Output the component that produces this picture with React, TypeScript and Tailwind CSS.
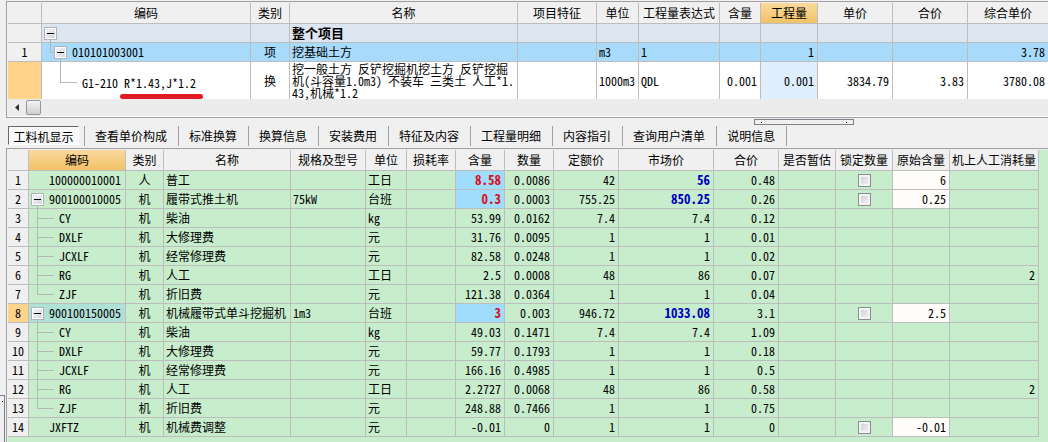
import React from 'react';
import clsx from 'clsx';

type TopRow = {
  no: string;
  kind: 'root' | 'item' | 'quota';
  code: string;
  type: string;
  name: string[];
  unit: string;
  expr: string;
  content: string;
  qty: string;
  price: string;
  total: string;
  full: string;
};

type Resource = {
  code: string;
  level: 'leaf' | 'parent' | 'child' | 'last';
  type: string;
  name: string;
  spec?: string;
  unit: string;
  content: string;
  qty: string;
  fixed: string;
  market: string;
  total: string;
  origin?: string;
  labour?: string;
  strong?: boolean;
  active?: boolean;
};

const topRows: TopRow[] = [
  { no: '', kind: 'root', code: '', type: '', name: ['整个项目'], unit: '', expr: '', content: '', qty: '', price: '', total: '', full: '' },
  { no: '1', kind: 'item', code: '010101003001', type: '项', name: ['挖基础土方'], unit: 'm3', expr: '1', content: '', qty: '1', price: '', total: '', full: '3.78' },
  {
    no: '',
    kind: 'quota',
    code: 'G1-210 R*1.43,J*1.2',
    type: '换',
    name: ['挖一般土方 反铲挖掘机挖土方 反铲挖掘', '机(斗容量1.0m3) 不装车 三类土 人工*1.', '43,机械*1.2'],
    unit: '1000m3',
    expr: 'QDL',
    content: '0.001',
    qty: '0.001',
    price: '3834.79',
    total: '3.83',
    full: '3780.08',
  },
];

const resources: Resource[] = [
  { code: '100000010001', level: 'leaf', type: '人', name: '普工', unit: '工日', content: '8.58', qty: '0.0086', fixed: '42', market: '56', total: '0.48', origin: '6', strong: true },
  { code: '900100010005', level: 'parent', type: '机', name: '履带式推土机', spec: '75kW', unit: '台班', content: '0.3', qty: '0.0003', fixed: '755.25', market: '850.25', total: '0.26', origin: '0.25', strong: true },
  { code: 'CY', level: 'child', type: '机', name: '柴油', unit: 'kg', content: '53.99', qty: '0.0162', fixed: '7.4', market: '7.4', total: '0.12' },
  { code: 'DXLF', level: 'child', type: '机', name: '大修理费', unit: '元', content: '31.76', qty: '0.0095', fixed: '1', market: '1', total: '0.01' },
  { code: 'JCXLF', level: 'child', type: '机', name: '经常修理费', unit: '元', content: '82.58', qty: '0.0248', fixed: '1', market: '1', total: '0.02' },
  { code: 'RG', level: 'child', type: '机', name: '人工', unit: '工日', content: '2.5', qty: '0.0008', fixed: '48', market: '86', total: '0.07', labour: '2' },
  { code: 'ZJF', level: 'last', type: '机', name: '折旧费', unit: '元', content: '121.38', qty: '0.0364', fixed: '1', market: '1', total: '0.04' },
  { code: '900100150005', level: 'parent', type: '机', name: '机械履带式单斗挖掘机', spec: '1m3', unit: '台班', content: '3', qty: '0.003', fixed: '946.72', market: '1033.08', total: '3.1', origin: '2.5', strong: true, active: true },
  { code: 'CY', level: 'child', type: '机', name: '柴油', unit: 'kg', content: '49.03', qty: '0.1471', fixed: '7.4', market: '7.4', total: '1.09' },
  { code: 'DXLF', level: 'child', type: '机', name: '大修理费', unit: '元', content: '59.77', qty: '0.1793', fixed: '1', market: '1', total: '0.18' },
  { code: 'JCXLF', level: 'child', type: '机', name: '经常修理费', unit: '元', content: '166.16', qty: '0.4985', fixed: '1', market: '1', total: '0.5' },
  { code: 'RG', level: 'child', type: '机', name: '人工', unit: '工日', content: '2.2727', qty: '0.0068', fixed: '48', market: '86', total: '0.58', labour: '2' },
  { code: 'ZJF', level: 'last', type: '机', name: '折旧费', unit: '元', content: '248.88', qty: '0.7466', fixed: '1', market: '1', total: '0.75' },
  { code: 'JXFTZ', level: 'leaf', type: '机', name: '机械费调整', unit: '元', content: '-0.01', qty: '0', fixed: '1', market: '1', total: '0', origin: '-0.01' },
];

const tabs = ['查看单价构成', '标准换算', '换算信息', '安装费用', '特征及内容', '工程量明细', '内容指引', '查询用户清单', '说明信息'];

const topHeads = ['', '编码', '类别', '名称', '项目特征', '单位', '工程量表达式', '含量', '工程量', '单价', '合价', '综合单价'];
const bottomHeads = ['', '编码', '类别', '名称', '规格及型号', '单位', '损耗率', '含量', '数量', '定额价', '市场价', '合价', '是否暂估', '锁定数量', '原始含量', '机上人工消耗量'];

const cell = 'border-r border-b border-[#bdbdbd] whitespace-nowrap';
const head = 'h-[21px] p-0 font-normal border-r border-b border-[#bdbdbd] whitespace-nowrap';
const hot = 'bg-linear-to-b from-[#fbd99d] to-[#f1c164]';
const line = 'absolute bg-[#b4b8b4]';

function Toggle({ label }: { label: string }) {
  return (
    <button aria-label={label} className="relative block size-[13px] shrink-0 border border-[#b0b4b8] bg-white p-px">
      <span className="flex size-full items-center justify-center bg-linear-to-br from-[#f4f4f6] to-[#d4d8de]">
        <span className="h-px w-[7px] bg-black" />
      </span>
    </button>
  );
}

function TopCode({ row }: { row: TopRow }) {
  if (row.kind === 'root') {
    return (
      <div className="relative flex h-[18px] items-center pl-[2px]">
        <Toggle label="整个项目" />
        <span className={clsx(line, 'left-[8px] top-[16px] h-[3px] w-px')} />
      </div>
    );
  }
  if (row.kind === 'item') {
    return (
      <div className="relative flex h-[18px] items-center gap-[5px] pl-[12px]">
        <span className={clsx(line, 'left-[8px] top-0 h-[9px] w-px')} />
        <span className={clsx(line, 'left-[8px] top-[9px] h-px w-[4px]')} />
        <Toggle label={row.code} />
        <span className={clsx(line, 'left-[18px] top-[16px] h-[3px] w-px')} />
        {row.code}
      </div>
    );
  }
  return (
    <div className="relative flex h-[37px] items-center pt-[4px] pl-[40px]">
      <span className={clsx(line, 'left-[18px] top-0 h-[21px] w-px')} />
      <span className={clsx(line, 'left-[18px] top-[20px] h-px w-[17px]')} />
      {row.code}
      {/* red marker under the conversion factors */}
      <span className="absolute left-[78px] top-[32px] h-[5px] w-[83px] rounded-full bg-[#e01b24]" />
    </div>
  );
}

function BottomCode({ row }: { row: Resource }) {
  const child = row.level === 'child' || row.level === 'last';
  return (
    <div className={clsx('relative flex h-[18px] items-center', child ? 'pl-[30px]' : row.level === 'leaf' ? 'pl-[20px]' : 'gap-[5px] pl-[2px]')}>
      {row.level === 'parent' && (
        <>
          <Toggle label={row.code} />
          <span className={clsx(line, 'left-[8px] top-[16px] h-[3px] w-px')} />
        </>
      )}
      {child && (
        <>
          <span className={clsx(line, 'left-[8px] top-0 w-px', row.level === 'last' ? 'h-[9px]' : 'h-[19px]')} />
          <span className={clsx(line, 'left-[8px] top-[9px] h-px w-[17px]')} />
        </>
      )}
      {row.code}
    </div>
  );
}

function BillTable() {
  return (
    <table className="w-full table-fixed border-separate border-spacing-0">
      <colgroup>
        <col className="w-[34px]" />
        <col className="w-[209px]" />
        <col className="w-[39px]" />
        <col className="w-[228px]" />
        <col className="w-[79px]" />
        <col className="w-[42px]" />
        <col className="w-[81px]" />
        <col className="w-[41px]" />
        <col className="w-[57px]" />
        <col className="w-[75px]" />
        <col className="w-[75px]" />
        <col />
      </colgroup>
      <thead>
        <tr>
          {topHeads.map((text, i) => (
            <th key={i} className={clsx(head, text === '工程量' ? hot : 'bg-[#f0f0f0]', i === 11 && 'border-r-0')}>
              {text}
            </th>
          ))}
        </tr>
      </thead>
      <tbody>
        {topRows.map((row) => {
          const quota = row.kind === 'quota';
          const td = clsx(cell, quota && 'border-b-0');
          return (
            <tr key={row.kind} className={clsx(quota ? 'h-[37px] bg-white' : 'h-[19px]', row.kind === 'root' && 'bg-[#dde5f0]', row.kind === 'item' && 'bg-[#a8dbfb]')}>
              <td className={clsx(td, 'p-0 text-center', quota ? 'bg-[#ffd48a]' : 'bg-[#f0f0f0]')}>{row.no}</td>
              <td className={clsx(td, 'p-0')}>
                <TopCode row={row} />
              </td>
              <td className={clsx(td, 'p-0 text-center')}>{row.type}</td>
              <td className={clsx(td, 'py-0 pr-0 pl-[2px]', quota && 'leading-[12px]', row.kind === 'root' && 'text-[13px] font-bold')}>
                {row.name.map((part) => (
                  <div key={part}>{part}</div>
                ))}
              </td>
              <td className={td} />
              <td className={clsx(td, 'p-0 pl-[2px]')}>{row.unit}</td>
              <td className={clsx(td, 'p-0 pl-[2px]')}>{row.expr}</td>
              <td className={clsx(td, 'p-0 pr-[3px] text-right')}>{row.content}</td>
              <td className={clsx(td, 'p-0 pr-[3px] text-right', quota && 'bg-[#dfefff]')}>{row.qty}</td>
              <td className={clsx(td, 'p-0 pr-[3px] text-right')}>{row.price}</td>
              <td className={clsx(td, 'p-0 pr-[3px] text-right')}>{row.total}</td>
              <td className={clsx(td, 'border-r-0 p-0 pr-[3px] text-right')}>{row.full}</td>
            </tr>
          );
        })}
      </tbody>
    </table>
  );
}

function ResourceTable() {
  return (
    <table className="w-full table-fixed border-separate border-spacing-0">
      <colgroup>
        <col className="w-[21px]" />
        <col className="w-[97px]" />
        <col className="w-[38px]" />
        <col className="w-[127px]" />
        <col className="w-[75px]" />
        <col className="w-[41px]" />
        <col className="w-[49px]" />
        <col className="w-[49px]" />
        <col className="w-[49px]" />
        <col className="w-[65px]" />
        <col className="w-[95px]" />
        <col className="w-[65px]" />
        <col className="w-[57px]" />
        <col className="w-[57px]" />
        <col className="w-[57px]" />
        <col className="w-[89px]" />
        <col />
      </colgroup>
      <thead>
        <tr>
          {bottomHeads.map((text, i) => (
            <th key={i} className={clsx(head, text === '编码' ? hot : 'bg-[#f0f0f0]')}>
              {text}
            </th>
          ))}
          <td className="p-0" />
        </tr>
      </thead>
      <tbody>
        {resources.map((row, i) => (
          <tr key={i} className="h-[19px]">
            <td className={clsx(cell, 'p-0 text-center', row.active ? 'bg-[#ffd48a]' : 'bg-[#f0f0f0]')}>{i + 1}</td>
            <td className={clsx(cell, 'p-0', row.active && 'bg-[#b0e1d6]')}>
              <BottomCode row={row} />
            </td>
            <td className={clsx(cell, 'p-0 text-center')}>{row.type}</td>
            <td className={clsx(cell, 'p-0 pl-[2px]')}>{row.name}</td>
            <td className={clsx(cell, 'p-0 pl-[2px]')}>{row.spec}</td>
            <td className={clsx(cell, 'p-0 pl-[2px]')}>{row.unit}</td>
            <td className={cell} />
            <td className={clsx(cell, 'p-0 pr-[3px] text-right', row.strong && 'bg-[#a0dcfb] text-[13px] font-bold text-[#d8101c]')}>{row.content}</td>
            <td className={clsx(cell, 'p-0 pr-[3px] text-right')}>{row.qty}</td>
            <td className={clsx(cell, 'p-0 pr-[3px] text-right')}>{row.fixed}</td>
            <td className={clsx(cell, 'p-0 pr-[3px] text-right', row.strong && 'text-[13px] font-bold text-[#0000c0]')}>{row.market}</td>
            <td className={clsx(cell, 'p-0 pr-[3px] text-right')}>{row.total}</td>
            <td className={cell} />
            <td className={clsx(cell, 'p-0')}>
              {row.origin && (
                <input
                  type="checkbox"
                  aria-label={`锁定数量 ${row.code}`}
                  className="mx-auto block size-[13px] appearance-none border border-[#8a908c] bg-linear-to-br from-[#c8ccd2] to-[#f6f6f6] shadow-[inset_0_0_0_2px_#f4f4f4]"
                />
              )}
            </td>
            <td className={clsx(cell, 'p-0 pr-[3px] text-right', row.origin && 'bg-[#fffdfa]')}>{row.origin}</td>
            <td className={clsx(cell, 'p-0 pr-[3px] text-right')}>{row.labour}</td>
            <td className="p-0" />
          </tr>
        ))}
      </tbody>
    </table>
  );
}

export default function App() {
  return (
    <div className="flex min-h-screen bg-[#f0f0f0] font-['Noto_Sans_CJK_SC',sans-serif] text-[12px] leading-[18px] text-black [font-feature-settings:'hwid']">
      {/* collapsed side pane */}
      <div className="flex w-[6px] shrink-0 flex-col justify-end">
        <div className="h-[47px] w-[5px] border-t border-r border-[#80808c] pt-[5px] pl-[2px]">
          <span className="block size-px bg-black" />
        </div>
      </div>

      <div className="flex min-w-0 flex-1 flex-col pt-px">
        <section className="border-y border-l border-[#a0a0a0] pt-px pl-px">
          <BillTable />
          <div className="flex h-[18px] items-start border-b border-white bg-[#ececec] pt-px">
            <button aria-label="向左滚动" className="flex h-[14px] w-[18px] items-center justify-center">
              <svg width="4" height="7" viewBox="0 0 4 7" fill="#303030">
                <path d="M4 0v7L0 3.500z" />
              </svg>
            </button>
            <button aria-label="滚动条" className="h-[15px] w-[15px] rounded-[2px] border border-[#979797] bg-linear-to-b from-[#f4f4f4] to-[#cfcfcf]" />
          </div>
        </section>

        <div className="relative pt-[8px] pb-[2px]">
          {/* splitter grip */}
          <div className="absolute top-px right-[194px] flex h-[6px] w-[100px] items-center justify-between border border-[#80808c] px-[6px]">
            <span className="size-px bg-black" />
            <span className="size-px bg-black" />
          </div>
          <nav className="flex h-[20px] pl-[2px]">
            <div className="border-r border-[#a0a0a0] pr-[5px]">
              <button className="h-[19px] w-[71px] border border-t-[#696969] border-r-white border-b-white border-l-[#696969] bg-[#f8f8f8] pt-px whitespace-nowrap">工料机显示</button>
            </div>
            {tabs.map((tab) => (
              <button key={tab} className="border-r border-[#a0a0a0] pr-[11px] pl-[10px] whitespace-nowrap">
                {tab}
              </button>
            ))}
          </nav>
        </div>

        <section className="flex flex-1 flex-col border-t border-l border-[#a0a0a0] pt-px pl-px">
          <div className="flex-1 bg-[#c8edcd]">
            <ResourceTable />
          </div>
        </section>
      </div>
    </div>
  );
}
